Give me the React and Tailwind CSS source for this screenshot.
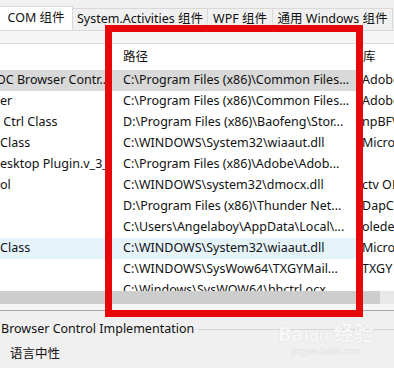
import React from 'react';

// Reference dialog rows: left name column (cut off), path column, library column
const rows = [
  { name: 'OC Browser Contr...', path: 'C:\\Program Files (x86)\\Common Files...', lib: 'Adobe', state: 'selected', shift: -4 },
  { name: 'er', path: 'C:\\Program Files (x86)\\Common Files...', lib: 'Adobe', shift: 0 },
  { name: ' Ctrl Class', path: 'D:\\Program Files (x86)\\Baofeng\\Stor...', lib: 'npBFV', shift: 0 },
  { name: 'Class', path: 'C:\\WINDOWS\\System32\\wiaaut.dll', lib: 'Micro', shift: 0 },
  { name: 'esktop Plugin.v_3_...', path: 'C:\\Program Files (x86)\\Adobe\\Adob...', lib: '', shift: 0 },
  { name: 'ol', path: 'C:\\WINDOWS\\system32\\dmocx.dll', lib: 'ctv OL', shift: 0 },
  { name: '', path: 'D:\\Program Files (x86)\\Thunder Net...', lib: 'DapC', shift: 0 },
  { name: '', path: 'C:\\Users\\Angelaboy\\AppData\\Local\\...', lib: 'olede', shift: 0 },
  { name: 'Class', path: 'C:\\WINDOWS\\System32\\wiaaut.dll', lib: 'Micro', state: 'hover', shift: 0 },
  { name: '', path: 'C:\\WINDOWS\\SysWow64\\TXGYMail...', lib: 'TXGY', shift: 0 },
  { name: '', path: 'C:\\Windows\\SysWOW64\\hhctrl.ocx', lib: '', shift: 0 },
];

const tabs = [
  { label: 'COM 组件', w: 'w-[73px]', active: true },
  { label: 'System.Activities 组件', w: 'w-[135px]' },
  { label: 'WPF 组件', w: 'w-[65px]' },
  { label: '通用 Windows 组件', w: 'w-[120px]' },
];

const App = () => {
  return (
    <div
      className="relative w-[394px] h-[368px] overflow-hidden bg-[#f0f0f0] text-[#111] flex flex-col"
      style={{ fontFamily: '"Noto Sans", "Noto Sans CJK SC", sans-serif' }}
    >
      {/* Tab strip */}
      <div className="h-[31px] flex items-end border-b border-[#d9d9d9] shrink-0">
        {tabs.map((t) => (
          <div
            key={t.label}
            className={`${t.w} shrink-0 flex items-center justify-center text-[12.5px] border-r border-t border-[#d9d9d9] ${
              t.active ? 'h-[24px] bg-white border-l-0' : 'h-[22px] bg-[#f0f0f0]'
            }`}
          >
            {t.label}
          </div>
        ))}
      </div>

      {/* Toolbar strip */}
      <div className="h-[13px] bg-[#f5f5f5] border-b border-[#dcdcdc] shrink-0" />

      {/* List */}
      <div className="h-[247px] bg-white overflow-hidden shrink-0 text-[12.5px]">
        {/* header */}
        <div className="h-[26px] flex items-center">
          <div className="w-[106px] shrink-0" />
          <div className="w-[250px] shrink-0 pl-[17px]">路径</div>
          <div className="pl-[7px]">库</div>
        </div>
        {rows.map((r, i) => (
          <div key={i} className="h-[21px] flex items-center">
            <div
              className={`w-[356px] shrink-0 h-full flex items-center ${
                r.state === 'selected' ? 'bg-[#d9d9d9]' : r.state === 'hover' ? 'bg-[#e5f3fb]' : ''
              }`}
            >
              <div className="w-[106px] shrink-0 overflow-hidden whitespace-pre">
                <span className={r.shift ? 'ml-[-4px] inline-block' : ''}>{r.name}</span>
              </div>
              <div className="pl-[17px] whitespace-nowrap overflow-hidden">{r.path}</div>
            </div>
            <div className="pl-[6px] whitespace-nowrap">{r.lib}</div>
          </div>
        ))}
      </div>

      {/* Horizontal scrollbar */}
      <div className="h-[19px] bg-[#f0f0f0] shrink-0 flex flex-col">
        <div className="h-[13px] flex">
          <div className="w-[380px] bg-[#cdcdcd]" />
          <div className="flex-1 bg-[#e8e8e8]" />
        </div>
        <div className="flex-1 bg-[#f5f5f5]" />
      </div>

      {/* Details panel */}
      <div className="flex-1 border-t border-[#a8a8a8] bg-[#f0f0f0] text-[12.5px]">
        <div className="mt-[9px] flex items-center">
          <span className="whitespace-nowrap pl-[1px]">Browser Control Implementation</span>
          <div className="flex-1 h-px bg-[#d6d6d6] ml-[4px]" />
        </div>
        <div className="mt-[6px] pl-[10px]">语言中性</div>
      </div>

      {/* Baidu watermark, very faint */}
      <div className="absolute left-[278px] top-[324px] flex flex-col items-center pointer-events-none">
        <div
          className="text-[20px] font-bold text-[#f7f7f7] leading-none"
          style={{ textShadow: '0 0 1px #d2d2d2' }}
        >
          Bai<span className="text-[15px]">du</span> 经验
        </div>
        <div className="text-[8px] text-[#e2e2e2] leading-none mt-[3px]">jingyan.baidu.com</div>
      </div>

      {/* Red annotation box */}
      <div className="absolute left-[105px] top-[25px] w-[258px] h-[292px] border-[7px] border-[#e8070a]" />
    </div>
  );
};

export default App;
